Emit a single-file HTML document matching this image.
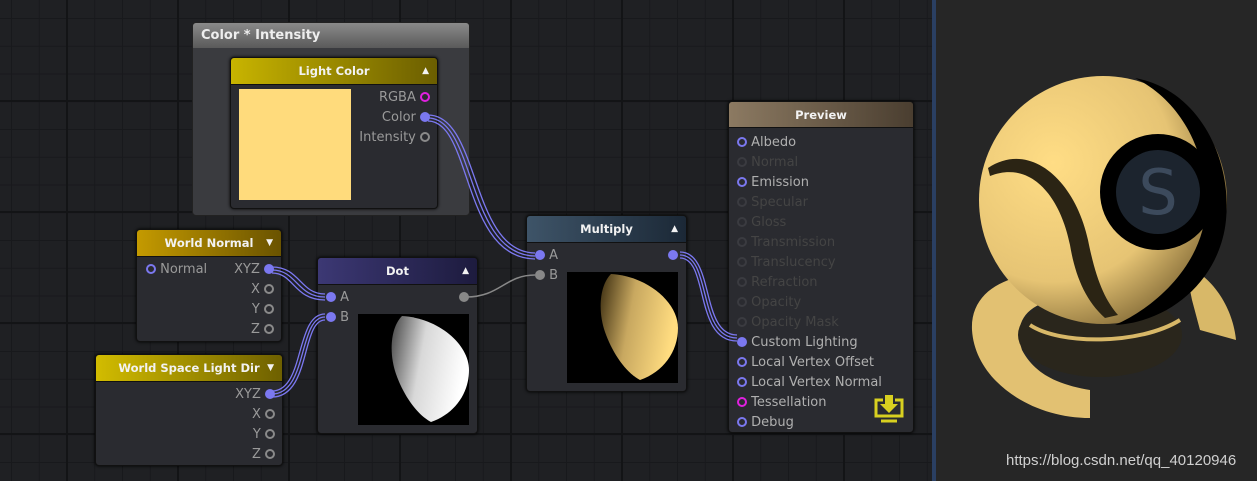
<!DOCTYPE html>
<html><head><meta charset="utf-8"><style>
*{margin:0;padding:0;box-sizing:border-box}
body{width:1257px;height:481px;overflow:hidden;background:#1e1f22;font-family:"DejaVu Sans","Liberation Sans",sans-serif;position:relative}
#graph{position:absolute;left:0;top:0;width:932px;height:481px;background-color:#1f2023;
background-image:linear-gradient(90deg,#131416 0 2px,transparent 2px),linear-gradient(0deg,#131416 0 2px,transparent 2px),linear-gradient(90deg,#18191c 0 1px,transparent 1px),linear-gradient(0deg,#18191c 0 1px,transparent 1px);
background-size:111px 111px,111px 111px,27.75px 27.75px,27.75px 27.75px;
background-position:66px 0,0 102px,11px 0,0 19px}
.n{position:absolute;background:#2a2b30;border:1px solid #111;border-radius:4px;box-shadow:0 0 3px #000}
.h{height:27px;border-radius:3px 3px 0 0;color:#f2f2f2;font-weight:bold;font-size:11.5px;text-align:center;line-height:27px;position:relative;border-bottom:1px solid #111}
.h .t{position:absolute;right:8px;top:0;font-size:9px}
.r{position:absolute;font-size:13px;color:#9a9a9a;white-space:nowrap}
.p{display:inline-block;width:10px;height:10px;border-radius:50%;vertical-align:-1px}
.pf{background:#7b78f0}
.po{border:2px solid #7b78f0}
.pg{border:2px solid #8a8a8a}
.pm{border:2px solid #e020e0}
.pgf{background:#888}
.pd{border:2px solid #3a3b40}
</style></head><body>
<div id="graph"></div>
<div style="position:absolute;left:192px;top:22px;width:278px;height:194px;background:#3a3b3f;border:1px solid #222;border-radius:4px">
<div style="height:25px;background:linear-gradient(#8a8a8a,#5a5a5a);border-radius:3px 3px 0 0;color:#eee;font-weight:bold;font-size:13px;line-height:25px;padding-left:8px">Color * Intensity</div></div>
<div class="n" style="left:230px;top:57px;width:208px;height:152px">
<div class="h" style="background:linear-gradient(90deg,#c8b400,#6b5e00)">Light Color<span class="t">▲</span></div>
<div style="position:absolute;left:8px;top:31px;width:112px;height:111px;background:#ffdb7c"></div>
<div class="r" style="right:7px;top:32px">RGBA <span class="p pm"></span></div>
<div class="r" style="right:7px;top:52px">Color <span class="p pf"></span></div>
<div class="r" style="right:7px;top:72px">Intensity <span class="p pg"></span></div>
</div>
<div class="n" style="left:136px;top:229px;width:146px;height:113px">
<div class="h" style="background:linear-gradient(90deg,#c49a00,#6a5300)">World Normal<span class="t">▼</span></div>
<div class="r" style="left:9px;top:32px"><span class="p po"></span> Normal</div>
<div class="r" style="right:7px;top:32px">XYZ <span class="p pf"></span></div>
<div class="r" style="right:7px;top:52px">X <span class="p pg"></span></div>
<div class="r" style="right:7px;top:72px">Y <span class="p pg"></span></div>
<div class="r" style="right:7px;top:92px">Z <span class="p pg"></span></div>
</div>
<div class="n" style="left:95px;top:354px;width:188px;height:112px">
<div class="h" style="background:linear-gradient(90deg,#d2bc00,#6e6000)">World Space Light Dir<span class="t">▼</span></div>
<div class="r" style="right:7px;top:32px">XYZ <span class="p pf"></span></div>
<div class="r" style="right:7px;top:52px">X <span class="p pg"></span></div>
<div class="r" style="right:7px;top:72px">Y <span class="p pg"></span></div>
<div class="r" style="right:7px;top:92px">Z <span class="p pg"></span></div>
</div>
<div class="n" style="left:317px;top:257px;width:161px;height:177px">
<div class="h" style="background:linear-gradient(90deg,#3c3874,#1d1b3e)">Dot<span class="t">▲</span></div>
<div class="r" style="left:8px;top:32px"><span class="p pf"></span> A</div>
<div class="r" style="left:8px;top:52px"><span class="p pf"></span> B</div>
<div class="r" style="right:8px;top:32px"><span class="p pgf"></span></div>
<svg style="position:absolute;left:40px;top:56px" width="111" height="111"><defs><linearGradient id="gw" x1="0" y1="0" x2="1" y2="0.25"><stop offset="0" stop-color="#444"/><stop offset=".45" stop-color="#d8d8d8"/><stop offset="1" stop-color="#fff"/></linearGradient></defs><rect width="111" height="111" fill="#000"/><path d="M44 2 C80 4 111 30 111 56 C111 80 96 100 73 108 C58 100 45 80 38 60 C31 40 32 14 44 2 Z" fill="url(#gw)"/></svg>
</div>
<div class="n" style="left:526px;top:215px;width:161px;height:177px">
<div class="h" style="background:linear-gradient(90deg,#3e5468,#1b2836)">Multiply<span class="t">▲</span></div>
<div class="r" style="left:8px;top:32px"><span class="p pf"></span> A</div>
<div class="r" style="left:8px;top:52px"><span class="p pgf"></span> B</div>
<div class="r" style="right:8px;top:32px"><span class="p pf"></span></div>
<svg style="position:absolute;left:40px;top:56px" width="111" height="111"><defs><linearGradient id="gy" x1="0" y1="0" x2="1" y2="0.25"><stop offset="0" stop-color="#3a2c10"/><stop offset=".45" stop-color="#c8a860"/><stop offset="1" stop-color="#ffdc80"/></linearGradient></defs><rect width="111" height="111" fill="#000"/><path d="M44 2 C80 4 111 30 111 56 C111 80 96 100 73 108 C58 100 45 80 38 60 C31 40 32 14 44 2 Z" fill="url(#gy)"/></svg>
</div>
<div class="n" style="left:728px;top:101px;width:186px;height:332px">
<div class="h" style="height:26px;line-height:26px;background:linear-gradient(90deg,#8c7a62,#4a3e30)">Preview</div>
<div style="position:absolute;left:8px;top:31px;font-size:13px;line-height:20px;white-space:nowrap">
<div style="color:#b0b0b0"><span class="p po"></span> Albedo</div>
<div style="color:#444"><span class="p pd"></span> Normal</div>
<div style="color:#b0b0b0"><span class="p po"></span> Emission</div>
<div style="color:#444"><span class="p pd"></span> Specular</div>
<div style="color:#444"><span class="p pd"></span> Gloss</div>
<div style="color:#444"><span class="p pd"></span> Transmission</div>
<div style="color:#444"><span class="p pd"></span> Translucency</div>
<div style="color:#444"><span class="p pd"></span> Refraction</div>
<div style="color:#444"><span class="p pd"></span> Opacity</div>
<div style="color:#444"><span class="p pd"></span> Opacity Mask</div>
<div style="color:#b0b0b0"><span class="p pf"></span> Custom Lighting</div>
<div style="color:#b0b0b0"><span class="p po"></span> Local Vertex Offset</div>
<div style="color:#b0b0b0"><span class="p po"></span> Local Vertex Normal</div>
<div style="color:#b0b0b0"><span class="p pm"></span> Tessellation</div>
<div style="color:#b0b0b0"><span class="p po"></span> Debug</div>
</div>
<svg style="position:absolute;left:144px;top:292px" width="32" height="30" viewBox="0 0 32 30"><g fill="none" stroke="#d8d020" stroke-width="3"><path d="M10 6 H3 V22 H29 V6 H22"/><path d="M8 27 H24"/></g><path d="M12 1 H20 V10 H25 L16 19 L7 10 H12 Z" fill="#d8d020"/></svg>
</div>
<svg style="position:absolute;left:0;top:0" width="932" height="481"><g fill="none" stroke="#7b78f0" stroke-width="1.3">
<path d="M428 115 C480 115 470 252 535 253"/><path d="M428 118 C476 118 466 255 535 256"/><path d="M428 121 C472 121 462 258 535 259"/>
<path d="M272 267 C300 267 300 294 325 294"/><path d="M272 270 C297 270 297 297 325 297"/><path d="M272 273 C294 273 294 300 325 300"/>
<path d="M272 391 C305 391 295 314 325 314"/><path d="M272 394 C308 394 298 317 325 317"/><path d="M272 397 C311 397 301 320 325 320"/>
<path d="M680 252 C715 252 700 335 737 335"/><path d="M680 255 C712 255 697 338 737 338"/><path d="M680 258 C709 258 694 341 737 341"/>
</g><path d="M466 297 C500 297 505 275 535 275" fill="none" stroke="#888" stroke-width="1.5"/></svg>
<div style="position:absolute;left:932px;top:0;width:325px;height:481px;background:#262626;border-left:4px solid #2a3f62">
<svg style="position:absolute;left:-4px;top:0" width="325" height="481" viewBox="932 0 325 481">
<defs><radialGradient id="sp" cx=".3" cy=".35" r=".8"><stop offset="0" stop-color="#ffdd85"/><stop offset=".6" stop-color="#e6c474"/><stop offset="1" stop-color="#6a5428"/></radialGradient></defs>
<path d="M972 330 C970 290 1010 272 1050 275 L1060 300 C1030 302 1012 320 1022 350 C1035 375 1060 385 1090 390 L1090 418 C1030 418 975 380 972 330Z" fill="#e2c172"/>
<path d="M1185 265 C1215 278 1233 310 1236 340 L1200 330 L1192 300Z" fill="#d8b868"/>
<ellipse cx="1100" cy="335" rx="82" ry="42" fill="#2a261c"/>
<path d="M1030 325 C1060 345 1140 345 1180 320" fill="none" stroke="#d8b868" stroke-width="4"/>
<circle cx="1103" cy="200" r="124" fill="url(#sp)"/>
<path d="M1135 78 C1200 90 1232 160 1226 220 C1220 280 1170 322 1115 325 C1160 305 1205 260 1206 205 C1207 150 1180 100 1135 78Z" fill="#000"/>
<circle cx="1158" cy="192" r="58" fill="#000"/>
<circle cx="1182" cy="180" r="52" fill="#d8b868" opacity="0" />
<circle cx="1158" cy="192" r="42" fill="#1c242e"/>
<text x="1158" y="214" text-anchor="middle" font-size="62" fill="#3c4a5c" font-family="DejaVu Sans">S</text>
<path d="M988 168 C1030 140 1075 180 1088 240 C1096 280 1105 300 1118 315 L1105 318 C1085 300 1075 275 1070 245 C1060 195 1030 160 990 176Z" fill="#2b2414"/>
</svg>
<div style="position:absolute;left:70px;top:452px;color:#d0d0d0;font-family:'Liberation Sans',sans-serif;font-size:15px">https://blog.csdn.net/qq_40120946</div>
</div>
</body></html>
